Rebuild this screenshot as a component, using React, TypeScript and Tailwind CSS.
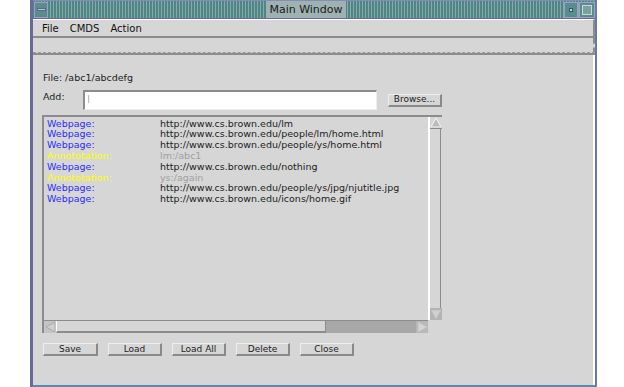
import React from "react";

const rows: { label: string; value: string; ann?: boolean }[] = [
  { label: "Webpage:", value: "http://www.cs.brown.edu/lm" },
  { label: "Webpage:", value: "http://www.cs.brown.edu/people/lm/home.html" },
  { label: "Webpage:", value: "http://www.cs.brown.edu/people/ys/home.html" },
  { label: "Annototation:", value: "lm:/abc1", ann: true },
  { label: "Webpage:", value: "http://www.cs.brown.edu/nothing" },
  { label: "Annototation:", value: "ys:/again", ann: true },
  { label: "Webpage:", value: "http://www.cs.brown.edu/people/ys/jpg/njutitle.jpg" },
  { label: "Webpage:", value: "http://www.cs.brown.edu/icons/home.gif" },
];

function Btn({ label, w }: { label: string; w: string }) {
  return (
    <div
      className={`${w} h-[13px] flex items-center justify-center text-[9px] text-[#222] border-b-2 border-r-2 border-b-[#8a8a8a] border-r-[#8a8a8a] border-t border-l border-t-[#eeeeee] border-l-[#eeeeee] leading-none`}
    >
      {label}
    </div>
  );
}

export default function App() {
  return (
    <div className="w-[624px] h-[387px] bg-white overflow-hidden" style={{ fontFamily: '"DejaVu Sans", sans-serif' }}>
      <div className="ml-[30px] w-[567px] h-[387px] flex flex-col border-l-[3px] border-l-[#6a6a9a] border-r-2 border-r-[#6a7aa0] bg-[#d6d6d6]">
        {/* title bar */}
        <div className="h-[19px] flex items-center bg-[repeating-linear-gradient(90deg,#4e8585_0px,#4e8585_2px,#86aaa8_2px,#86aaa8_3px)] border-t border-t-[#8a8ab8] border-b border-b-[#6a6a9a]">
          <div className="w-[14px] h-[16px] ml-[1px] flex items-center justify-center bg-[#5a8c8c] border border-[#9aa0c8]">
            <div className="w-[9px] h-[3px] bg-[#b8c8d0] border border-[#5a6a8a]" />
          </div>
          <div className="flex-1 flex justify-center">
            <span className="px-[3px] text-[11px] text-[#1a1a1a] bg-[#9fb2b2] leading-[17px]">Main Window</span>
          </div>
          <div className="w-[14px] h-[16px] flex items-center justify-center bg-[#5a8c8c] border border-[#9aa0c8]">
            <div className="w-[4px] h-[4px] bg-[#b8d0d0] border border-[#3a5a6a]" />
          </div>
          <div className="w-[16px] h-[16px] ml-[1px] flex items-center justify-center bg-[#5a8c8c] border border-[#9aa0c8]">
            <div className="w-[10px] h-[10px] border border-[#c8d8d8] bg-[#7aa0a0]" />
          </div>
        </div>
        {/* menu bar */}
        <div className="h-[19px] flex items-center gap-[11px] pl-[9px] pt-[1px] text-[10px] text-[#111] border-t border-t-white border-b-2 border-b-[#8c8c8c] border-r-2 border-r-[#8c8c8c]">
          <span>File</span>
          <span>CMDS</span>
          <span>Action</span>
        </div>
        {/* toolbar area */}
        <div className="h-[15px] border-b border-dashed border-b-[#9a9a9a] border-r-2 border-r-[#8c8c8c]" />
        <div className="h-[2px] bg-[#8c8c8c]" />
        {/* content */}
        <div className="flex-1 flex flex-col border-r-2 border-r-white pl-[9px] pt-[17px] text-[9.5px]">
          <div className="h-[12px] flex items-center text-[#222] ml-[1px]">File: /abc1/abcdefg</div>
          <div className="mt-[6px] flex items-center">
            <span className="w-[40px] text-[#222] ml-[1px] -mt-[6px]">Add:</span>
            <div className="w-[294px] h-[20px] bg-white border-t-2 border-l-2 border-t-[#8c8c8c] border-l-[#8c8c8c] border-b border-r border-b-[#eeeeee] border-r-[#eeeeee] flex items-center pl-[2px]">
              <span className="text-[#777] text-[11px] font-light">I</span>
            </div>
            <div className="ml-[11px] w-[54px] h-[13px] flex items-center justify-center text-[9px] text-[#222] border-b-2 border-r-2 border-b-[#8a8a8a] border-r-[#8a8a8a] border-t border-l border-t-[#eeeeee] border-l-[#eeeeee]">
              Browse...
            </div>
          </div>
          {/* list */}
          <div className="mt-[5px] w-[400px] h-[218px] flex flex-col border-t-2 border-l-2 border-t-[#8c8c8c] border-l-[#8c8c8c]">
            <div className="flex-1 flex">
              <div className="flex-1 pt-[1px] pl-[3px]">
                {rows.map((r, i) => (
                  <div key={i} className="h-[10.8px] flex items-center leading-none">
                    <span className={`w-[113px] ${r.ann ? "text-[#ffff00]" : "text-[#2b2bff]"}`}>{r.label}</span>
                    <span className={r.ann ? "text-[#a0a0a0]" : "text-[#222]"}>{r.value}</span>
                  </div>
                ))}
              </div>
              <div className="w-[14px] flex flex-col border-l-2 border-l-white bg-[#d6d6d6]">
                <div className="h-[12px] flex items-center justify-center border-b border-b-[#8c8c8c]">
                  <svg width="10" height="9" viewBox="0 0 10 9">
                    <polygon points="5,0 10,9 0,9" fill="#bcbcbc" stroke="#f4f4f4" strokeWidth="1" />
                  </svg>
                </div>
                <div className="flex-1 border-r border-r-[#8c8c8c] mr-[1px]" />
                <div className="h-[12px] flex items-center justify-center bg-[#b4b4b4]">
                  <svg width="10" height="9" viewBox="0 0 10 9">
                    <polygon points="0,0 10,0 5,9" fill="#d0d0d0" stroke="#c0c0c0" strokeWidth="1" />
                  </svg>
                </div>
              </div>
            </div>
            <div className="h-[13px] flex border-t border-t-[#8c8c8c] mr-[14px]">
              <div className="w-[12px] flex items-center justify-center bg-[#c4c4c4]">
                <svg width="9" height="10" viewBox="0 0 9 10">
                  <polygon points="0,5 9,0 9,10" fill="#d0d0d0" stroke="#a8a8a8" strokeWidth="1" />
                </svg>
              </div>
              <div className="w-[270px] border-l border-l-white border-b-2 border-b-[#8c8c8c] border-r border-r-[#8c8c8c]" />
              <div className="flex-1 bg-[#a8a8a8]" />
              <div className="w-[12px] flex items-center justify-center bg-[#b8b8b8]">
                <svg width="9" height="10" viewBox="0 0 9 10">
                  <polygon points="9,5 0,0 0,10" fill="#d4d4d4" stroke="#c4c4c4" strokeWidth="1" />
                </svg>
              </div>
            </div>
          </div>
          {/* buttons */}
          <div className="mt-[10px] flex gap-[10px] ml-[1px]">
            <Btn label="Save" w="w-[55px]" />
            <Btn label="Load" w="w-[54px]" />
            <Btn label="Load All" w="w-[54px]" />
            <Btn label="Delete" w="w-[54px]" />
            <Btn label="Close" w="w-[54px]" />
          </div>
          <div className="flex-1" />
        </div>
        <div className="h-[2px] bg-[#5a8ab0]" />
      </div>
    </div>
  );
}
